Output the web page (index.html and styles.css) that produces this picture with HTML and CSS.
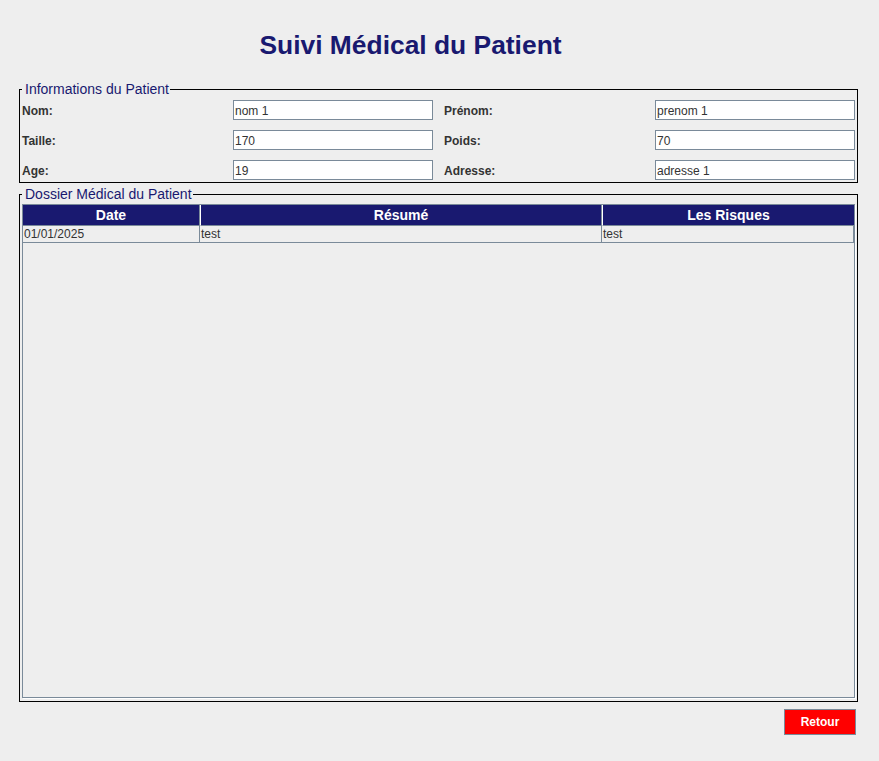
FILE: index.html
```html
<!DOCTYPE html>
<html lang="fr">
<head>
<meta charset="utf-8">
<title>Suivi Médical du Patient</title>
<link rel="stylesheet" href="styles.css">
</head>
<body>
<div class="page">
  <h1 class="title">Suivi Médical du Patient</h1>

  <fieldset class="group info">
    <legend class="group-title">Informations du Patient</legend>
    <div class="form-grid">
      <label class="lbl">Nom:</label>
      <div class="field">nom 1</div>
      <label class="lbl lbl-right">Prénom:</label>
      <div class="field">prenom 1</div>

      <label class="lbl">Taille:</label>
      <div class="field">170</div>
      <label class="lbl lbl-right">Poids:</label>
      <div class="field">70</div>

      <label class="lbl">Age:</label>
      <div class="field">19</div>
      <label class="lbl lbl-right">Adresse:</label>
      <div class="field">adresse 1</div>
    </div>
  </fieldset>

  <fieldset class="group dossier">
    <legend class="group-title">Dossier Médical du Patient</legend>
    <div class="scroll">
      <table class="grid">
        <colgroup>
          <col class="c-date">
          <col class="c-resume">
          <col class="c-risk">
        </colgroup>
        <thead>
          <tr><th>Date</th><th>Résumé</th><th>Les Risques</th></tr>
        </thead>
        <tbody>
          <tr><td>01/01/2025</td><td>test</td><td>test</td></tr>
        </tbody>
      </table>
    </div>
  </fieldset>

  <div class="actions">
    <button class="btn-back" type="button">Retour</button>
  </div>
</div>
</body>
</html>
```

FILE: styles.css
```css
html, body {
  margin: 0;
  padding: 0;
  background: #eeeeee;
}
body {
  font-family: "Liberation Sans", Arial, sans-serif;
  color: #333333;
  width: 879px;
  height: 761px;
  overflow: hidden;
}
.page {
  padding: 0 21px 0 19px;
}
.title {
  margin: 0;
  padding: 30px 56px 0 0;
  height: 31px;
  line-height: 31px;
  font-size: 26.4px;
  font-weight: bold;
  color: #191970;
  text-align: center;
}
.group {
  margin: 0;
  padding: 0 2px 2px 2px;
  border: 1px solid #000000;
  width: 833px;
  min-width: 0;
}
.info {
  margin-top: 20px;
}
.dossier {
  margin-top: 3px;
  padding-bottom: 3px;
}
.group-title {
  padding: 0 1px 0 3px;
  margin: 0;
  font-size: 14px;
  line-height: 17px;
  height: 17px;
  color: #191970;
}
.form-grid {
  display: grid;
  grid-template-columns: 211px 200px 222px 200px;
  grid-auto-rows: 20px;
  row-gap: 10px;
  padding-top: 2px;
}
.lbl {
  font-size: 12px;
  font-weight: bold;
  color: #333333;
  line-height: 20px;
  padding-top: 1px;
}
.lbl-right {
  padding-left: 11px;
}
.field {
  box-sizing: border-box;
  height: 20px;
  background: #ffffff;
  border: 1px solid #7a8a99;
  font-size: 12px;
  line-height: 18px;
  padding: 1px 0 0 1px;
  color: #333333;
}
.scroll {
  box-sizing: border-box;
  margin-top: 1px;
  height: 494px;
  border: 1px solid #7a8a99;
  box-shadow: 1px 1px 0 #ffffff;
  background: #eeeeee;
}
.grid {
  table-layout: fixed;
  border-collapse: separate;
  border-spacing: 0;
  width: 831px;
}
.c-date { width: 177px; }
.c-resume { width: 402px; }
.c-risk { width: 252px; }
.grid th {
  box-sizing: border-box;
  height: 21px;
  padding: 0;
  background: #191970;
  color: #ffffff;
  font-size: 14px;
  font-weight: bold;
  line-height: 20px;
  text-align: center;
  border-bottom: 1px solid #7a8a99;
}
.grid th + th {
  border-left: 1px solid #ffffff;
}
.grid th:not(:last-child) {
  border-right: 1px solid #7a8a99;
}
.grid td {
  height: 16px;
  padding: 0 0 0 1px;
  font-size: 12px;
  line-height: 16px;
  color: #333333;
  border-bottom: 1px solid #7a8a99;
  border-right: 1px solid #7a8a99;
  white-space: nowrap;
  overflow: hidden;
}
.actions {
  display: flex;
  justify-content: flex-end;
  padding-top: 7px;
}
.btn-back {
  margin: 0 2px 0 0;
  width: 72px;
  height: 26px;
  padding: 0;
  background: #ff0000;
  border: 1px solid #7a8a99;
  color: #ffffff;
  font-family: "Liberation Sans", Arial, sans-serif;
  font-size: 12px;
  font-weight: bold;
  cursor: pointer;
}
```
